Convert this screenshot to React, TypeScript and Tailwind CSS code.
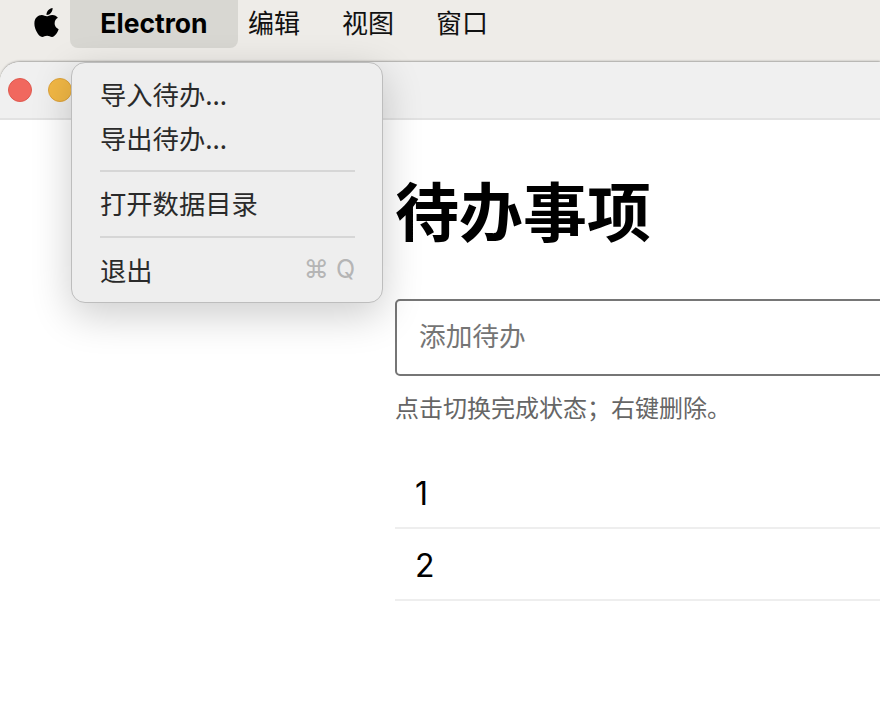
const cjk = "font-['Noto_Sans_CJK_SC','Inter',sans-serif]";

function AppleLogo() {
  return (
    <svg viewBox="0 0 384 512" className="h-[33px] w-[27px] fill-black">
      <path d="M318.7 268.7c-.2-36.7 16.4-64.4 50-84.8-18.8-26.9-47.2-41.7-84.7-44.6-35.5-2.8-74.3 20.7-88.5 20.7-15 0-49.4-19.7-76.4-19.7C63.3 141.2 4 184.8 4 273.5q0 39.3 14.4 81.2c12.8 36.7 59 126.7 107.2 125.2 25.2-.6 43-17.9 75.8-17.9 31.8 0 48.3 17.9 76.4 17.9 48.6-.7 90.4-82.5 102.6-119.3-65.2-30.7-61.7-90-61.7-91.9zm-56.6-164.2c27.3-32.4 24.8-61.9 24-72.5-24.1 1.4-52 16.4-67.9 34.9-17.5 19.8-27.8 44.3-25.6 71.9 26.1 2 49.9-11.4 69.5-34.3z" />
    </svg>
  );
}

function MenuBar() {
  return (
    <div className={`flex h-[62px] items-start bg-[#eeece8] pl-[33px] text-[26px] text-[#111] ${cjk}`}>
      <div className="flex h-[45px] items-center">
        <AppleLogo />
      </div>
      <div className="ml-[10px] flex h-[48px] w-[168px] items-center justify-center rounded-b-[8px] bg-[#d8d7d2] font-['Inter',sans-serif] text-[26.5px] font-bold text-black">
        Electron
      </div>
      <div className="ml-[10px] flex h-[44px] items-center gap-[42px] leading-none">
        <span>编辑</span>
        <span>视图</span>
        <span>窗口</span>
      </div>
    </div>
  );
}

function FileMenu() {
  return (
    <div
      className={`absolute left-[71px] top-[62px] flex h-[241px] w-[312px] flex-col rounded-[14px] border border-[#bdbdbd] bg-[#eeeeee] px-[28px] pt-[8px] text-[26.3px] leading-[45px] text-[#2a2a2a] shadow-[0_12px_40px_rgba(0,0,0,0.2)] ${cjk}`}
    >
      <div>导入待办...</div>
      <div className="h-[43px] leading-[43px]">导出待办...</div>
      <div className="mt-[11px] h-[2px] w-[255px] bg-[#d6d6d6]" />
      <div className="mt-[8px] h-[45px]">打开数据目录</div>
      <div className="mt-[11px] h-[2px] w-[255px] bg-[#d6d6d6]" />
      <div className="mt-[9px] flex h-[45px] w-[255px] items-center justify-between">
        <span>退出</span>
        <span className="font-['Inter',sans-serif] text-[25px] text-[#b5b5b5]">⌘ Q</span>
      </div>
    </div>
  );
}

export default function App() {
  return (
    <div className={`relative h-[716px] w-[880px] overflow-hidden bg-[#eeece8] ${cjk}`}>
      <MenuBar />
      <div className="flex h-[654px] flex-col overflow-hidden rounded-tl-[20px] bg-white shadow-[0_-1px_2px_rgba(0,0,0,0.3)]">
        <div className="flex h-[58px] items-center gap-[16px] border-b-2 border-[#e2e2e2] bg-[#f0f0f0] pl-[8px]">
          <span className="h-[24px] w-[24px] rounded-full border border-[#de5a50] bg-[#f1685e]" />
          <span className="h-[24px] w-[24px] rounded-full border border-[#dca23c] bg-[#f2b845]" />
        </div>
        <div className="flex flex-col pl-[395px]">
          <h1 className="mt-[44px] h-[88px] text-[64px] font-bold leading-[88px] text-black">待办事项</h1>
          <div className="mt-[47px] flex h-[77px] w-[520px] items-center rounded-[5px] border-2 border-[#767676] pb-[4px] pl-[22px] text-[26.7px] text-[#757575]">
            添加待办
          </div>
          <p className="mt-[15px] text-[24px] leading-[32px] text-[#666]">点击切换完成状态；右键删除。</p>
          <div className="mt-[34px] flex h-[72px] items-center border-b-2 border-[#eeeeee] pl-[20px] pt-[4px] font-['Inter',sans-serif] text-[32px] text-black">
            1
          </div>
          <div className="flex h-[72px] items-center border-b-2 border-[#eeeeee] pl-[20px] pt-[4px] font-['Inter',sans-serif] text-[32px] text-black">
            2
          </div>
        </div>
      </div>
      <FileMenu />
    </div>
  );
}
